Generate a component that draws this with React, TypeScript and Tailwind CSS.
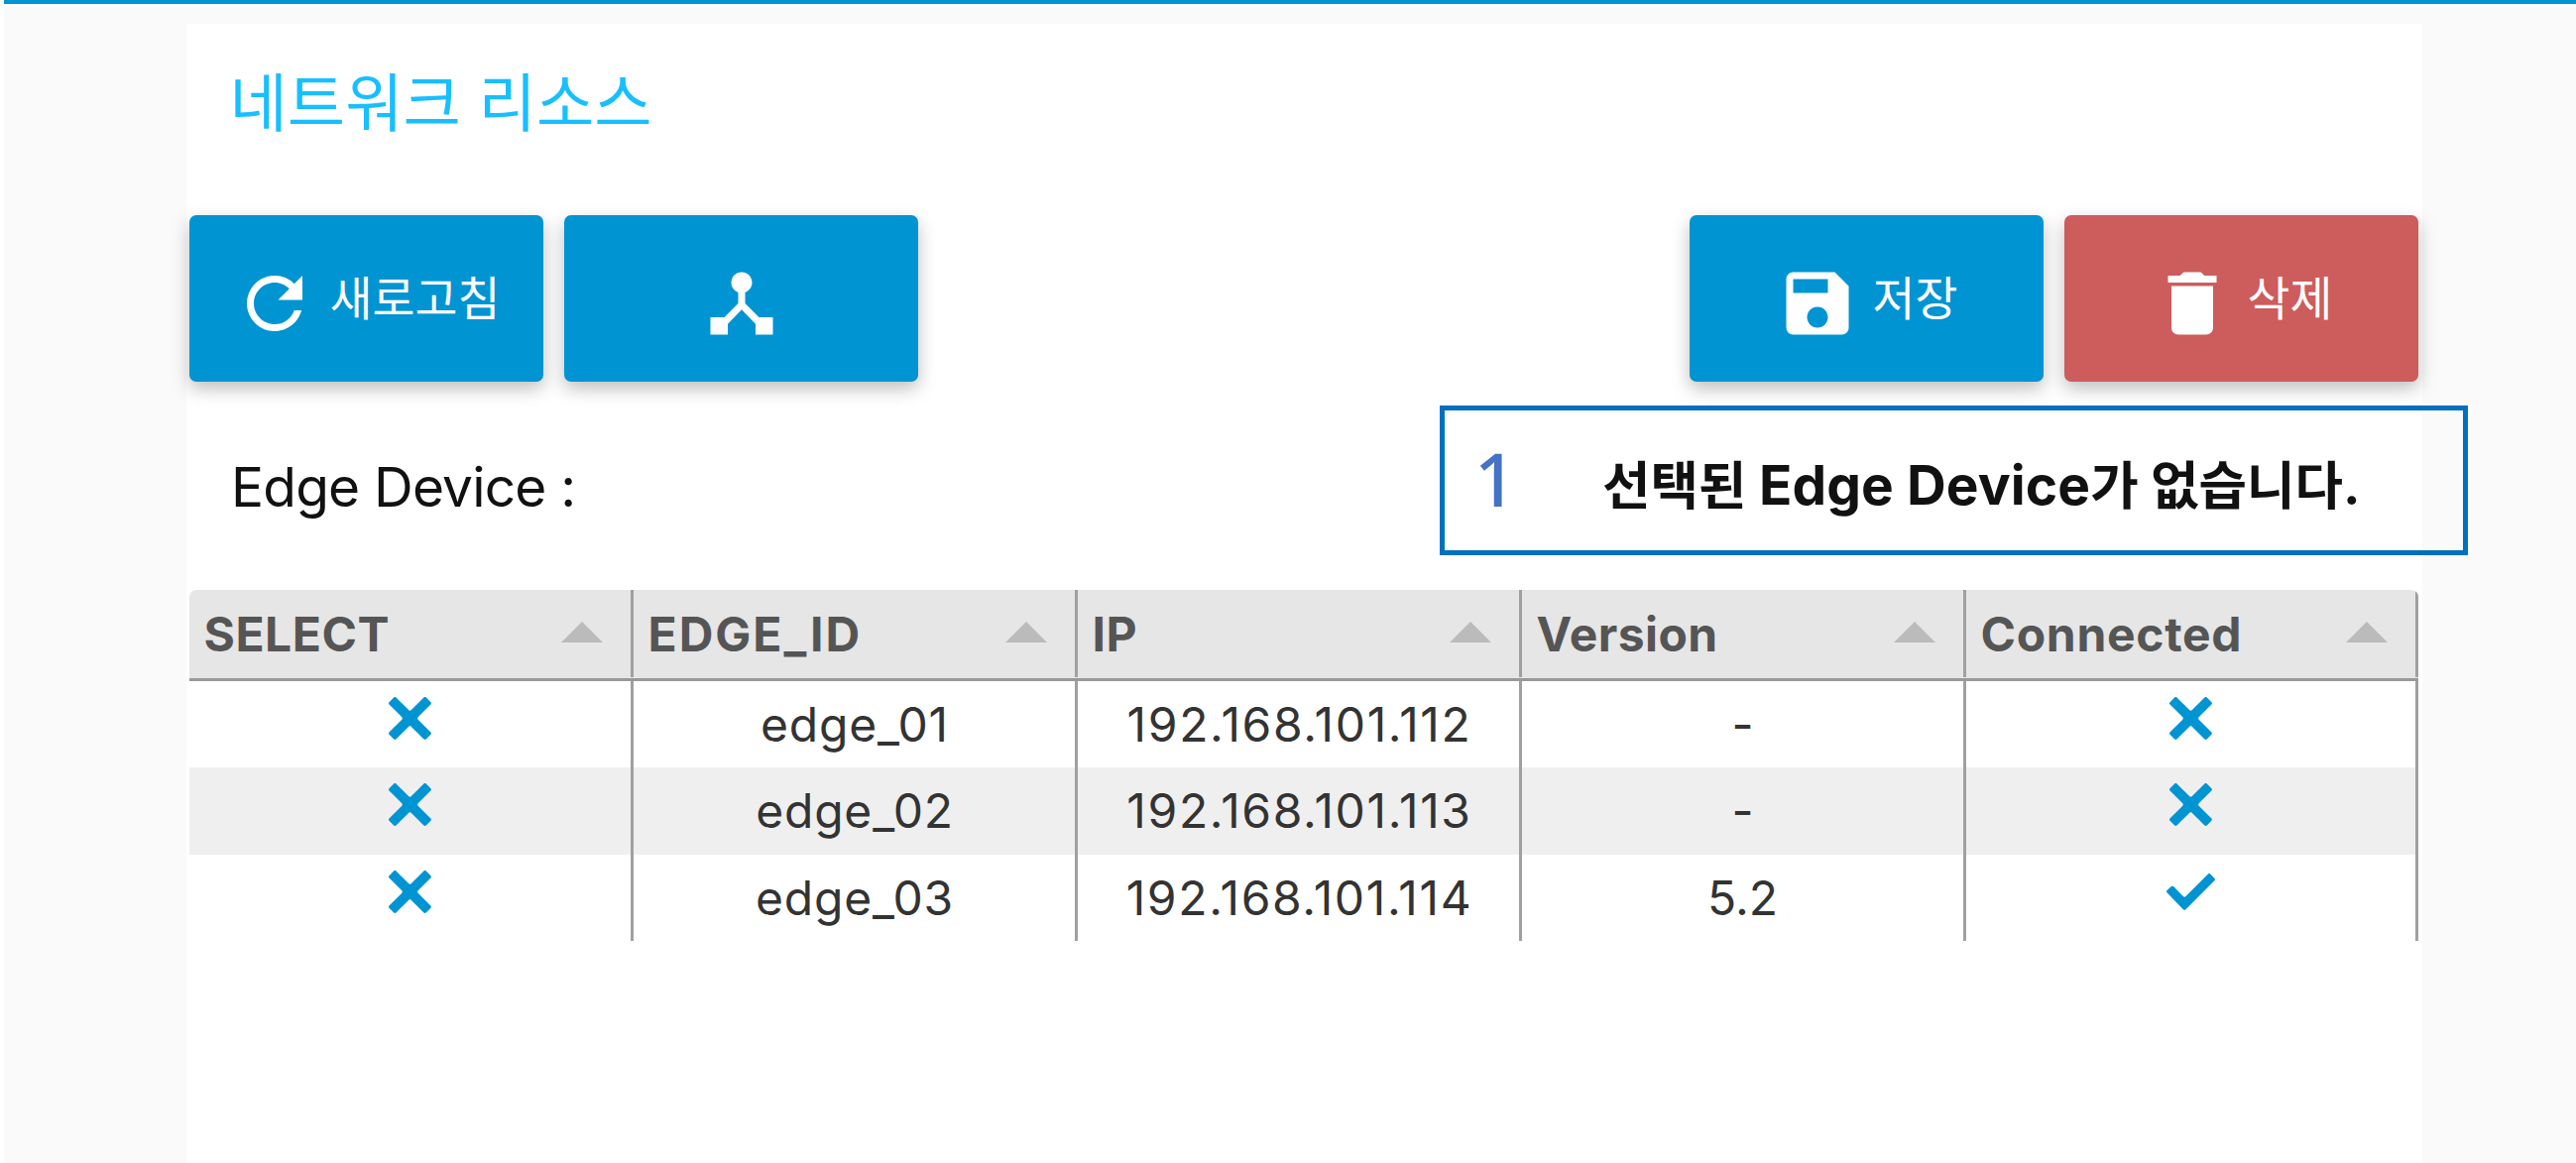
import React from "react";
import { MdDelete, MdDeviceHub, MdRefresh, MdSave } from "react-icons/md";

type Row = { id: string; ip: string; version: string; selected: boolean; connected: boolean };

const rows: Row[] = [
  { id: "edge_01", ip: "192.168.101.112", version: "-", selected: false, connected: false },
  { id: "edge_02", ip: "192.168.101.113", version: "-", selected: false, connected: false },
  { id: "edge_03", ip: "192.168.101.114", version: "5.2", selected: false, connected: true },
];

const headers = [
  { label: "SELECT", tracking: "tracking-[0.5px]" },
  { label: "EDGE_ID", tracking: "tracking-[2px]" },
  { label: "IP", tracking: "tracking-[0.5px]" },
  { label: "Version", tracking: "tracking-[0.4px]" },
  { label: "Connected", tracking: "tracking-[0.7px]" },
];

const gridCols = "grid grid-cols-[448px_448px_448px_448px_456px]";

const crossPath =
  "M22.245,4.015c0.313,0.313,0.313,0.826,0,1.139l-6.276,6.27c-0.313,0.312-0.313,0.826,0,1.14l6.273,6.272c0.313,0.313,0.313,0.826,0,1.14l-2.285,2.277c-0.314,0.312-0.828,0.312-1.142,0l-6.271-6.271c-0.313-0.313-0.828-0.313-1.141,0l-6.276,6.267c-0.313,0.313-0.828,0.313-1.141,0l-2.282-2.28c-0.313-0.313-0.313-0.826,0-1.14l6.278-6.269c0.313-0.312,0.313-0.826,0-1.14L1.709,5.147c-0.314-0.313-0.314-0.827,0-1.14l2.284-2.278C4.308,1.417,4.821,1.417,5.135,1.73L11.405,8c0.314,0.314,0.828,0.314,1.141,0.001l6.276-6.267c0.312-0.312,0.826-0.312,1.141,0L22.245,4.015z";
const tickPath =
  "M21.652,3.211c-0.293-0.295-0.77-0.295-1.061,0L9.41,14.34c-0.293,0.297-0.771,0.297-1.062,0L3.449,9.351C3.304,9.203,3.114,9.13,2.923,9.129C2.73,9.128,2.534,9.201,2.387,9.351l-2.165,1.946C0.078,11.445,0,11.63,0,11.823c0,0.194,0.078,0.397,0.223,0.544l4.94,5.184c0.292,0.296,0.771,0.776,1.062,1.07l2.124,2.141c0.292,0.293,0.769,0.293,1.062,0l14.366-14.34c0.293-0.294,0.293-0.777,0-1.071L21.652,3.211z";

function Mark({ on }: { on: boolean }) {
  return (
    <svg viewBox="0 0 24 24" className="mt-[13px] size-[49px] fill-[#0094d2]">
      <path d={on ? tickPath : crossPath} />
    </svg>
  );
}

function Cell({ children, className = "" }: { children: React.ReactNode; className?: string }) {
  return (
    <div className={`flex h-full justify-center border-r-[3.5px] border-[#a0a0a0] ${className}`}>{children}</div>
  );
}

function ActionButton({
  icon,
  label,
  color,
}: {
  icon: React.ReactNode;
  label?: string;
  color: string;
}) {
  return (
    <button
      className={`flex h-[168px] w-[357px] items-center justify-center gap-[14px] rounded-[7px] text-white shadow-[0_7px_18px_rgba(0,0,0,0.26)] ${color}`}
    >
      <span className="pt-[10px]">{icon}</span>
      {label && <span className="text-[46.7px] leading-[60px]">{label}</span>}
    </button>
  );
}

export default function App() {
  return (
    <div className="h-[1173px] w-[2598px] overflow-hidden bg-white pl-[4px] font-['Inter','Noto_Sans_CJK_KR',sans-serif]">
      <div className="h-[3.5px] bg-[#0094d2]" />
      <div className="mt-[2.5px] h-[1167px] bg-[#fafafa] pt-[18px] pl-[184px]">
        <main className="h-[1149px] w-[2255px] bg-white pl-[3px]">
          <h1 className="pt-[34px] pl-[40.5px] text-[63.4px] leading-[92px] text-[#18bfff]">네트워크 리소스</h1>

          <div className="mt-[67px] flex w-[2248px] justify-between">
            <div className="flex gap-[21px]">
              <ActionButton icon={<MdRefresh className="size-[84px]" />} label="새로고침" color="bg-[#0094d2]" />
              <ActionButton icon={<MdDeviceHub className="size-[84px]" />} color="bg-[#0094d2]" />
            </div>
            <div className="flex gap-[21px]">
              <ActionButton icon={<MdSave className="size-[84px]" />} label="저장" color="bg-[#0094d2]" />
              <ActionButton icon={<MdDelete className="size-[84px]" />} label="삭제" color="bg-[#cd5c5c]" />
            </div>
          </div>

          <div className="mt-[24px] flex h-[151px] justify-between">
            <p className="pt-[46px] pl-[42px] text-[55px] leading-[72px] tracking-[-0.8px] text-[#111]">
              Edge Device :
            </p>
            <div className="-mr-[46px] flex w-[1037px] shrink-0 border-[5px] border-[#0070c0]">
              <span className="w-[159px] pt-[19px] pl-[30px] font-['Noto_Sans'] text-[74px] leading-[100px] font-medium text-[#4472c4]">
                1
              </span>
              <p className="pt-[39px] text-[52.7px] leading-[72px] font-bold whitespace-nowrap text-[#111]">
                선택된 <span className="text-[55px] tracking-[0.1px]">Edge Device</span>가 없습니다.
              </p>
            </div>
          </div>

          <section className="mt-[35px] w-[2248px]">
            <div
              className={`${gridCols} h-[91.5px] overflow-hidden rounded-t-[7px] border-b-[3.5px] border-[#999] bg-[#e6e6e6]`}
            >
              {headers.map((h) => (
                <div
                  key={h.label}
                  className="flex h-[88px] justify-between border-r-[3.5px] border-[#a0a0a0] pr-[28px] pl-[14.5px]"
                >
                  <span className={`pt-[15px] text-[48px] leading-[60px] font-bold text-[#555] ${h.tracking}`}>
                    {h.label}
                  </span>
                  <span className="mt-[32px] size-0 border-x-[21px] border-b-[21px] border-x-transparent border-b-[#bbb]" />
                </div>
              ))}
            </div>
            {rows.map((r, i) => (
              <div
                key={r.id}
                className={`${gridCols} h-[87.5px] text-[48px] leading-[87px] text-[#333] ${i % 2 ? "bg-[#efefef]" : "bg-white"}`}
              >
                <Cell>
                  <Mark on={r.selected} />
                </Cell>
                <Cell className="pl-[1px] tracking-[0.8px]">{r.id}</Cell>
                <Cell className="pl-[2px] tracking-[1.65px]">{r.ip}</Cell>
                <Cell>{r.version}</Cell>
                <Cell>
                  <Mark on={r.connected} />
                </Cell>
              </div>
            ))}
          </section>
        </main>
      </div>
    </div>
  );
}
